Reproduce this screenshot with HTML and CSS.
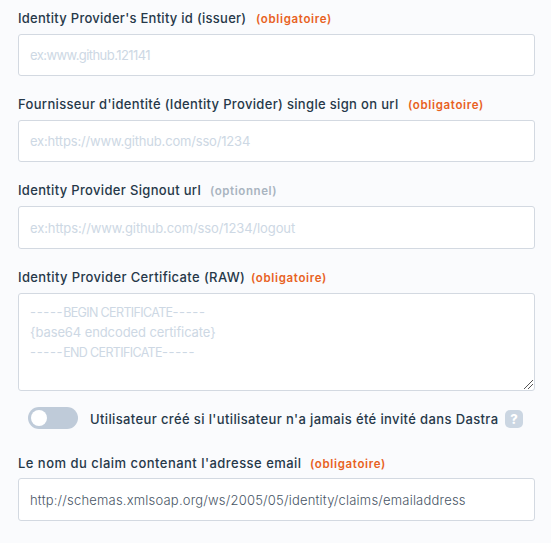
FILE: index.html
```
<!DOCTYPE html>
<html lang="fr">
<head>
<meta charset="utf-8">
<title>Configuration SSO</title>
<link rel="stylesheet" href="styles.css">
</head>
<body>
<form class="form">
  <div class="field">
    <label class="label"><span class="name name-issuer">Identity Provider's Entity id (issuer)</span><span class="tag">(obligatoire)</span></label>
    <input class="control issuer" type="text" placeholder="ex:www.github.121141">
  </div>
  <div class="field">
    <label class="label"><span class="name name-signon">Fournisseur d'identité (Identity Provider) single sign on url</span><span class="tag">(obligatoire)</span></label>
    <input class="control signon" type="text" placeholder="ex:https://www.github.com/sso/1234">
  </div>
  <div class="field">
    <label class="label"><span class="name name-signout">Identity Provider Signout url</span><span class="tag optional">(optionnel)</span></label>
    <input class="control signout" type="text" placeholder="ex:https://www.github.com/sso/1234/logout">
  </div>
  <div class="field">
    <label class="label"><span class="name name-cert">Identity Provider Certificate (RAW)</span><span class="tag near">(obligatoire)</span></label>
    <div class="control certificate" role="textbox" aria-multiline="true">
      <div><span class="dash">-----</span><span class="caps">BEGIN CERTIFICATE</span><span class="dash">-----</span></div>
      <div class="body-line">{base64 endcoded certificate}</div>
      <div><span class="dash">-----</span><span class="caps">END CERTIFICATE</span><span class="dash">-----</span></div>
      <svg class="grip" width="9" height="9" viewBox="0 0 9 9" shape-rendering="crispEdges"><path d="M0 8h1v1H0zM1 7h1v1H1zM2 6h1v1H2zM3 5h1v1H3zM4 4h1v1H4zM5 3h1v1H5zM6 2h1v1H6zM7 1h1v1H7zM8 0h1v1H8zM4 8h1v1H4zM5 7h1v1H5zM6 6h1v1H6zM7 5h1v1H7zM8 4h1v1H8z" fill="#555"/></svg>
    </div>
  </div>
  <div class="switch-row">
    <span class="switch" role="switch" aria-checked="false"><span class="knob"></span></span>
    <span class="name name-switch">Utilisateur créé si l'utilisateur n'a jamais été invité dans Dastra</span>
    <span class="help">?</span>
  </div>
  <div class="field">
    <label class="label label-email"><span class="name name-email">Le nom du claim contenant l'adresse email</span><span class="tag">(obligatoire)</span></label>
    <input class="control claim" type="text" value="http://schemas.xmlsoap.org/ws/2005/05/identity/claims/emailaddress">
  </div>
</form>
</body>
</html>
```
FILE: styles.css
```
* { box-sizing: border-box; }
body {
  margin: 0;
  background: #fafbfd;
  color: #2c3e50;
  font-family: Inter, "Liberation Sans", sans-serif;
  font-size: 13px;
}
.form {
  display: grid;
  grid-template-rows: 86px 86px 87px 142px 43px 86px;
  padding: 0 16px 0 18px;
}
.field { display: flex; flex-direction: column; }
.label {
  display: flex;
  align-items: center;
  flex: none;
  height: 34px;
  padding-top: 2px;
  white-space: nowrap;
}
.label-email { padding-top: 4px; }
.name { color: #263849; font-weight: 500; flex: none; }
.name-issuer { width: 229px; letter-spacing: 0.27px; }
.name-signon { width: 381px; letter-spacing: 0.33px; }
.name-signout { width: 183px; letter-spacing: 0.33px; }
.name-cert { width: 227px; letter-spacing: 0.37px; }
.name-switch { width: 415px; letter-spacing: 0.37px; }
.name-email { width: 283px; letter-spacing: 0.47px; }
.tag {
  margin: 1px 0 0 9px;
  color: #e8621f;
  font-size: 11.5px;
  font-weight: 600;
  letter-spacing: 0.66px;
}
.tag.near { margin-left: 6px; }
.tag.optional { color: #a9b4c0; letter-spacing: 0.58px; }
.control {
  width: 517px;
  height: 42px;
  padding: 0 11px;
  border: 1px solid #d3d9e1;
  border-radius: 3px;
  outline: 0;
  background: #fff;
  color: #495666;
  font: 300 13px Inter, "Liberation Sans", sans-serif;
}
.control::placeholder { color: #cdd8e4; font-weight: 400; opacity: 1; }
.issuer { letter-spacing: -0.57px; }
.signon { letter-spacing: -0.18px; }
.signout { height: 43px; letter-spacing: -0.11px; }
.claim { height: 43px; letter-spacing: 0.2px; }
.certificate {
  position: relative;
  height: 98px;
  padding-top: 8px;
  color: #cdd8e4;
  font-weight: 400;
  line-height: 20px;
}
.body-line { letter-spacing: -0.1px; }
.dash { letter-spacing: 0.65px; }
.caps { font-size: 12.5px; letter-spacing: -0.64px; line-height: 1; }
.grip { position: absolute; right: 1px; bottom: 1px; }
.switch-row {
  display: flex;
  align-items: center;
  height: 36px;
  padding-left: 10px;
}
.switch {
  width: 50px;
  height: 22px;
  margin: 0 12px 2px 0;
  padding: 3px;
  border-radius: 11px;
  background: #bfcbd9;
}
.knob {
  display: block;
  width: 16px;
  height: 16px;
  border-radius: 50%;
  background: #fff;
}
.help {
  width: 18px;
  height: 18px;
  border-radius: 5px;
  background: #cbd6e2;
  color: #fff;
  font-size: 13px;
  font-weight: 800;
  line-height: 18px;
  text-align: center;
}
```
